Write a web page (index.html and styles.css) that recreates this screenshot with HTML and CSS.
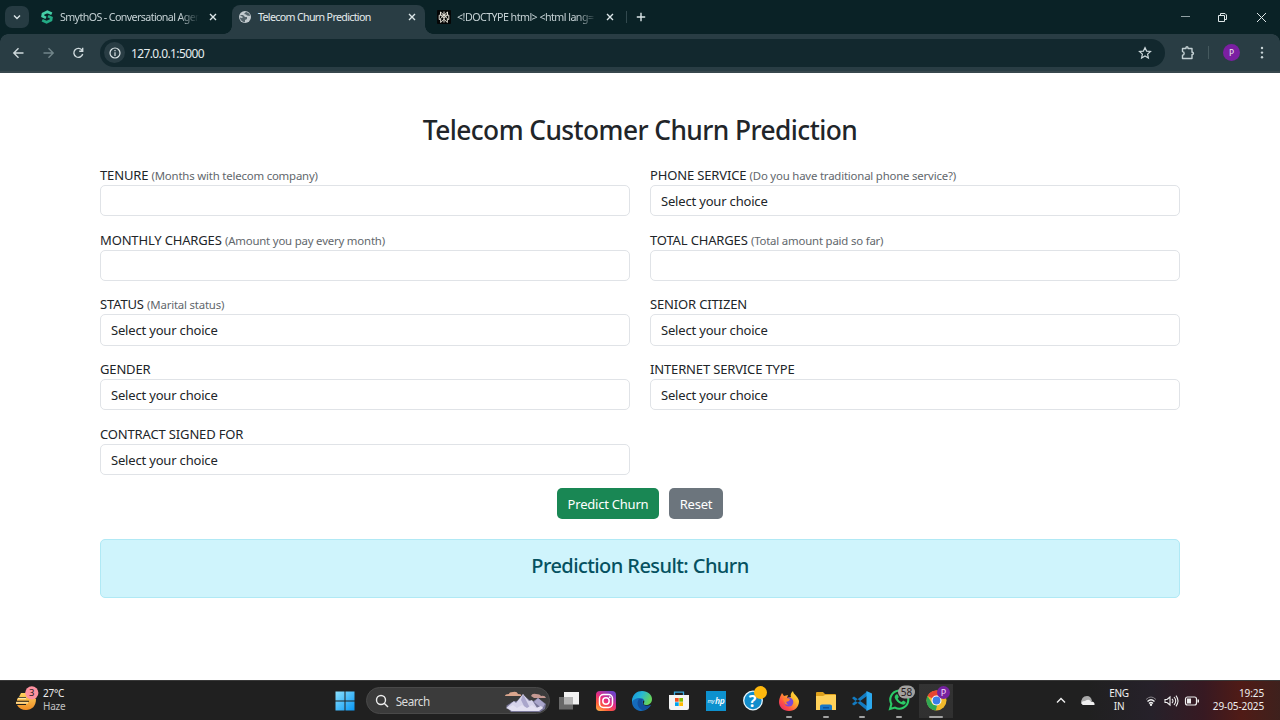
FILE: index.html
```html
<!DOCTYPE html>
<html lang="en">
<head>
<meta charset="utf-8">
<title>Telecom Churn Prediction</title>
<link rel="stylesheet" href="styles.css">
</head>
<body>
<header class="tabs">
  <div class="tab-search"><svg width="10" height="10" viewBox="0 0 10 10"><path class="ln" d="M2 3.5 5 6.5 8 3.5"/></svg></div>
  <div class="tab first">
    <svg class="fav" width="14" height="14" viewBox="0 0 14 14" fill="none" stroke-width="2.7"><path stroke="#45cfa7" d="M11.8 3.8 7.4 1.7 3 3.9 2.6 6.2 6 7.9"/><path stroke="#23aa84" d="M2.2 10.2 6.6 12.3 11 10.1 11.4 7.8 8 6.1"/></svg>
    <span class="title fade t1">SmythOS - Conversational Agen</span>
    <svg class="close" width="10" height="10" viewBox="0 0 10 10"><path class="ln" d="M2 2 8 8M8 2 2 8"/></svg>
  </div>
  <div class="tab active">
    <svg class="fav" width="14" height="14" viewBox="0 0 14 14"><circle cx="7" cy="7" r="6" fill="#c3cbcf"/><path fill="#53636a" d="M2 5h3l2 2 2 0 0 2-2 1v2.3C4 12 2 9.500 1.800 7.500L4 8 5 7 3 6zM8 1.800l3.500 2L12 6 9 5.500 8 4.500 6 4l1-1z"/></svg>
    <span class="title t2">Telecom Churn Prediction</span>
    <svg class="close end" width="10" height="10" viewBox="0 0 10 10"><path class="ln" d="M2 2 8 8M8 2 2 8"/></svg>
  </div>
  <div class="tab third">
    <svg class="fav" width="14" height="14" viewBox="0 0 14 14"><rect width="14" height="14" rx="1" fill="#050505"/><path fill="none" stroke="#e7e3d8" stroke-width="1" d="M7 1.500v11M3.500 2v3L7 8.200 10.500 5V2L7 5.200 3.500 2M2.200 5.200h9.600v4.300h-1.500v3L7 9.200l-3.300 3.300v-3H2.200zM7 5.200 3.700 8.500v1M7 5.200l3.300 3.300v1"/></svg>
    <span class="title fade t3">&lt;!DOCTYPE html&gt; &lt;html lang=</span>
    <svg class="close" width="10" height="10" viewBox="0 0 10 10"><path class="ln" d="M2 2 8 8M8 2 2 8"/></svg>
  </div>
  <i class="tab-rule"></i>
  <svg class="plus" width="10" height="10" viewBox="0 0 10 10"><path class="ln" d="M5 .8v8.400M.8 5h8.400"/></svg>
  <svg class="wins" width="94" height="16" viewBox="0 0 94 16" fill="none" stroke="#dfe7e8"><path stroke="#91a1a4" d="M5 7.500h9"/><path d="M42.500 6.500h6v6h-6zM44.500 6V4.500h4.500l1.500 1.500v4.500H49"/><path d="m81 4 9 9m0-9-9 9"/></svg>
</header>
<nav class="toolbar">
  <svg width="100" height="28" viewBox="0 0 100 28" fill="none" stroke="#cfdadd" stroke-width="1.400"><path d="M23.500 14h-9.500M18.500 9.300 13.800 14l4.700 4.700"/><path stroke="#71858a" d="M43.500 14H53M48.500 9.300l4.700 4.700-4.700 4.700"/><path d="M82.200 11.500a4.500 4.500 0 1 0 .5 3.500M82.700 8.800v3.400h-3.500"/></svg>
  <div class="address">
    <span class="info"><svg width="12" height="12" viewBox="0 0 12 12" fill="none" stroke="#dce5e7" stroke-width="1.200"><circle cx="6" cy="6" r="5"/><path d="M6 5.300V9M6 3v1.200"/></svg></span>
    <span class="url">127.0.0.1:5000</span>
    <svg class="star" width="14" height="14" viewBox="0 0 14 14"><path fill="none" stroke="#cbd7da" stroke-width="1.200" d="m7 1.600 1.600 3.500 3.900.4-2.900 2.600.8 3.900L7 10 3.600 12l.8-3.900-2.900-2.600 3.900-.4z"/></svg>
  </div>
  <svg class="ext" width="16" height="16" viewBox="0 0 16 16"><path fill="none" stroke="#c3d0d3" stroke-width="1.400" stroke-linejoin="round" d="M2.500 3.500H6V2.700a1 1 0 0 1 2 0v.8h4v3.700h.6a1.200 1.200 0 0 1 0 2.300H12v4H2.500v-3.200c2.200-.2 2.200-3.600 0-3.800z"/></svg>
  <i class="bar-rule"></i><span class="avatar">P</span>
  <svg class="dots" width="4" height="14" viewBox="0 0 4 14" fill="#c9d5d8"><circle cx="2" cy="2" r="1.200"/><circle cx="2" cy="6.600" r="1.200"/><circle cx="2" cy="11.200" r="1.200"/></svg>
</nav>
<main class="page">
  <h1>Telecom Customer Churn Prediction</h1>
  <form class="grid">
    <div class="field"><label><span>TENURE</span> <small>(Months with telecom company)</small></label><div class="control"></div></div>
    <div class="field"><label><span>PHONE SERVICE</span> <small>(Do you have traditional phone service?)</small></label><div class="control">Select your choice</div></div>
    <div class="field"><label><span>MONTHLY CHARGES</span> <small>(Amount you pay every month)</small></label><div class="control"></div></div>
    <div class="field"><label><span>TOTAL CHARGES</span> <small>(Total amount paid so far)</small></label><div class="control"></div></div>
    <div class="field"><label><span>STATUS</span> <small>(Marital status)</small></label><div class="control">Select your choice</div></div>
    <div class="field"><label><span>SENIOR CITIZEN</span></label><div class="control">Select your choice</div></div>
    <div class="field"><label><span>GENDER</span></label><div class="control">Select your choice</div></div>
    <div class="field"><label><span>INTERNET SERVICE TYPE</span></label><div class="control">Select your choice</div></div>
    <div class="field"><label><span>CONTRACT SIGNED FOR</span></label><div class="control">Select your choice</div></div>
  </form>
  <div class="actions"><button class="btn green">Predict Churn</button><button class="btn gray">Reset</button></div>
  <div class="alert">Prediction Result: Churn</div>
</main>
<footer class="taskbar">
  <div class="weather">
    <svg width="26" height="30" viewBox="0 0 26 30"><defs><linearGradient id="sun" x2="0" y2="1"><stop stop-color="#ffd25c"/><stop offset="1" stop-color="#ee8c25"/></linearGradient></defs><path fill="url(#sun)" d="M6 7h8l7 6c0 7-4 11-10 11-4 0-7-1.500-9-5h9v-1H1v-2.300h13v-1H2v-2.200h9v-1.500H4z"/><path stroke="#ffe6a1" stroke-width="1.300" d="M3 12.500h8M1 16.800h12"/><circle cx="16.800" cy="6.800" r="6.600" fill="#ff91a0"/><text class="badge-num small-num" x="16.800" y="10.300">3</text></svg>
    <div class="two"><span>27°C</span><span class="dim">Haze</span></div>
  </div>
  <div class="apps">
    <div class="app start"><svg width="20" height="20" viewBox="0 0 20 20"><defs><linearGradient id="win" x2="1" y2="1"><stop stop-color="#8be1ff"/><stop offset="1" stop-color="#0796f3"/></linearGradient></defs><path fill="url(#win)" d="M.5.5h9v9h-9zM10.500.5h9v9h-9zM.5 10.500h9v9h-9zM10.500 10.500h9v9h-9z"/></svg></div>
    <div class="search">
      <svg width="14" height="14" viewBox="0 0 14 14" fill="none" stroke="#ededed" stroke-width="1.400"><circle cx="6" cy="6" r="4.500"/><path d="m9.200 9.200 3.800 3.800"/></svg><span>Search</span>
      <svg class="mount" width="44" height="22" viewBox="0 0 44 22"><path fill="#777597" d="m2 16 6-4 5-1 6-6 9 7 6-4 8 6-1 5-5 3H7z"/><path fill="#d6d3ea" d="M2 18 10 11l2 2 7-9 6 7 3-1 7 11H8z"/><path fill="#aaa6cb" d="m19 4 8 16h-5L17 10zM30 12l4-4 7 6-3 5-3-3z"/><path fill="#e3e0f1" d="m4 18 5-3 4 3 5-3 5 3 5-3 4 3 5-2 2 2-4 3H8z"/><path fill="#dba68e" d="M1 6q0-2 4-2 0-2 4-2 4-1 5 2 4 0 3 2z"/><path fill="#c59992" d="M27 6q1-3 5-2 4 0 5 2 4-1 5 2H30z"/></svg>
    </div>
    <div class="app"><svg width="22" height="20" viewBox="0 0 22 20"><rect x="6" y="1" width="15" height="12.500" fill="#f1f1f1"/><rect x="1" y="6" width="14" height="12.500" fill="#686868"/><path fill="#b4b4b4" d="M6 6h9v7.500H6z"/></svg></div>
    <div class="app"><svg width="20" height="20" viewBox="0 0 20 20"><defs><linearGradient id="ig" x1="0" y1="1" x2=".7" y2="0"><stop stop-color="#ffc34e"/><stop offset=".3" stop-color="#ff5b38"/><stop offset=".6" stop-color="#e62c83"/><stop offset="1" stop-color="#7142c9"/></linearGradient></defs><rect width="20" height="20" rx="4" fill="url(#ig)"/><g fill="none" stroke="#fff" stroke-width="1.500"><rect x="3.500" y="3.500" width="13" height="13" rx="4"/><circle cx="10" cy="10" r="3.200"/></g><circle cx="13.800" cy="6.200" r=".9" fill="#fff"/></svg></div>
    <div class="app"><svg width="20" height="20" viewBox="0 0 20 20"><defs><linearGradient id="edge" y2=".4"><stop stop-color="#1491df"/><stop offset=".5" stop-color="#27b8d4"/><stop offset="1" stop-color="#65d35c"/></linearGradient></defs><path fill="#156bbc" d="M0 11C0 5 4 2 9 2l7 5-5 3c-1 5 3 7 8 4-3 5-8 6-11 6-5-1-8-5-8-9z"/><path fill="url(#edge)" d="M0 9C1 3 5 0 10 0c6 0 10 4 10 8 0 4-3 6-6 6-2 0-3-1-2-2 1-2 0-5-4-5-4 0-8 2-8 5z"/><path fill="#124f9d" d="M7 8c-3 4-1 9 3 11 4 .5 7-2 9-5-5 2-9 0-9-3 0-2 1-3 1-3z"/></svg></div>
    <div class="app"><svg width="20" height="20" viewBox="0 0 20 20"><path fill="none" stroke="#38a8de" stroke-width="1.300" d="M5.500 5V1.200h9V5"/><path fill="#f4f4f4" d="M0 4h20v13q0 2-2 2H2q-2 0-2-2z"/><path fill="#f25022" d="M6 7h3.700v3.700H6z"/><path fill="#7fba00" d="M10.300 7H14v3.700h-3.700z"/><path fill="#00a4ef" d="M6 11.300h3.700V15H6z"/><path fill="#ffb900" d="M10.300 11.300H14V15h-3.700z"/></svg></div>
    <div class="app"><svg width="20" height="20" viewBox="0 0 20 20"><rect width="20" height="20" fill="#0d91ce"/><text class="my" x="1.500" y="12">my</text><text class="hp" x="9" y="13">hp</text></svg></div>
    <div class="app"><svg class="over help-icon" width="26" height="26" viewBox="0 0 26 26"><circle cx="11" cy="15.500" r="9.300" fill="#128dcc" stroke="#e7f5fb" stroke-width="1.300"/><text class="help" x="10.500" y="21.500">?</text><circle cx="18.500" cy="7.500" r="6.500" fill="#ffb80d"/></svg></div>
    <div class="app running"><svg width="20" height="20" viewBox="0 0 20 20"><defs><linearGradient id="fox" x1="1" x2="0" y2="1"><stop stop-color="#fff34f"/><stop offset=".35" stop-color="#ffb52a"/><stop offset=".7" stop-color="#ff4e45"/><stop offset="1" stop-color="#d9207d"/></linearGradient></defs><path fill="url(#fox)" d="M2 4 3 2l2 3 4-1-1 3 4-1c-1-3 1-5 2-6 0 3 5 5 6 10 0 6-4 10-10 10S0 16 0 11c0-3 1-5 2-7z"/><circle cx="9.800" cy="11" r="4.500" fill="#7948d7"/><path fill="#ff812e" d="M4 8q4-2 7 0l-1 2-3 1 2 3-3-1z"/></svg></div>
    <div class="app running"><svg width="20" height="20" viewBox="0 0 20 20"><path fill="#dfa11c" d="M0 2q0-1 1-1h6l2 2h10q1 0 1 1v14H0z"/><path fill="#ffd15a" d="M0 5h7l2-1h11v15H0z"/><path fill="#1677c8" d="M4 19v-4q0-1.500 2-1.500h8q2 0 2 1.500v4z"/><path fill="#0a519d" d="M7 16h6v1.500H7z"/></svg></div>
    <div class="app running"><svg width="20" height="20" viewBox="0 0 20 20"><path fill="#137bc1" d="m0 7 2-1.500L15 15v4.500L1 8zM0 13l2 1.500L15 5V.5L1 12z"/><path fill="#2ca9ef" d="m14.500 0 5.500 2.500v15L14.500 20z"/></svg></div>
    <div class="app running"><svg class="over wa" width="28" height="26" viewBox="0 0 28 26"><path fill="#202020" stroke="#2bca66" stroke-width="2.100" d="M3 24l1.400-5A9 9 0 1 1 8 22.600z"/><path fill="#2bca66" d="M8.500 10c1-1 2-1 2.500.2l.8 2-1.100 1.200c1 2 2 2.800 4 3.700l1.500-1.500 2.500 1.400c.3 2-1.700 3-3.300 2.600-4-1-7.400-4.800-7.800-7.500z"/><rect x="11" y=".5" width="17" height="13" rx="6.500" fill="#a2a19f"/><text class="badge-num" x="19.500" y="10.800">58</text></svg></div>
    <div class="app running selected"><svg class="over" width="26" height="26" viewBox="0 0 26 26"><circle cx="12.500" cy="15.500" r="10" fill="#f1b92b"/><path fill="#e64532" d="M3.500 11A10 10 0 0 1 21.200 10.500h-8.700v5z"/><path fill="#31a853" d="M3.500 11 9.200 20l4 0-1.400 5.500A10 10 0 0 1 3.500 11z"/><circle cx="12.500" cy="15.500" r="5" fill="#fff"/><circle cx="12.500" cy="15.500" r="3.900" fill="#3b7ee8"/><circle cx="19.500" cy="7.500" r="6.500" fill="#7621a0"/><text class="badge-p" x="19.500" y="10.800">P</text></svg></div>
  </div>
  <div class="tray">
    <svg width="42" height="18" viewBox="0 0 42 18"><path fill="none" stroke="#f0f0f0" stroke-width="1.400" d="m3 10.500 4-4 4 4"/><path fill="#a9a9a9" d="M27 12q0-8 6-8 4 0 5 5z"/><path fill="#f0f0f0" d="M28.500 13q-2.500-4 2.500-4 4-2.500 6 .4 4-.2 3.500 3.600z"/></svg>
    <div class="two lang"><span>ENG</span><span>IN</span></div>
    <svg class="status" width="54" height="16" viewBox="0 0 54 16" fill="none" stroke="#eee"><path stroke="#858187" d="M1 6.500q5-5 10 0"/><path stroke-width="1.300" d="M2.500 8.500q3.500-3.500 7 0M4 10.500q2-2 4 0"/><circle cx="6" cy="11.800" r="1.200" fill="#eee" stroke="none"/><path stroke-width="1.100" d="M20 6.500h2l3-2.500v8l-3-2.500h-2zM27 6q2 2 0 4M29 4q3.500 4 0 8M31 2.700q4 5.300 0 10.600"/><rect x="40.500" y="4" width="11" height="8" rx="2" stroke-width="1.200"/><path fill="#eee" stroke="none" d="M42 5.500h4v5h-4zM52.500 6.500H54v3h-1.500z"/></svg>
    <div class="two clock"><span>19:25</span><span class="date">29-05-2025</span></div>
  </div>
</footer>
</body>
</html>
```
FILE: styles.css
```css
*{box-sizing:border-box}
body{margin:0;width:1280px;height:720px;overflow:hidden;background:#fff;color:#212529;font:13.3px "Noto Sans",sans-serif;display:flex;flex-direction:column}
svg{flex:none;display:block}
.ln{fill:none;stroke:#dce6e8;stroke-width:1.4}
.tabs{height:34px;flex:none;background:#0a2226;display:flex;align-items:center;padding-left:5px}
.tab-search{width:24px;height:22px;border-radius:7px;background:#263b42;display:grid;place-items:center}
.tab{height:34px;width:193px;display:flex;align-items:center;padding-left:6px;color:#c6d2d5}
.first{margin-left:5px;width:198px}
.fav{margin-right:6px}
.title{font-size:10.7px;white-space:nowrap;width:139px;line-height:18px}
.close{margin-left:9px}
.end{margin-left:10px}
.fade{-webkit-mask-image:linear-gradient(90deg,#000 86%,transparent);mask-image:linear-gradient(90deg,#000 86%,transparent)}
.t1{letter-spacing:-.62px}
.t2{letter-spacing:-.68px}
.t3{letter-spacing:-.55px}
.active{height:29px;align-self:flex-end;background:#293d44;border-radius:8px 8px 0 0;color:#e4ebed;padding-bottom:5px;position:relative}
.active::before,.active::after{content:"";position:absolute;bottom:0;width:8px;height:8px}
.active::before{left:-8px;background:radial-gradient(circle at 0 0,transparent 7.5px,#293d44 8px)}
.active::after{right:-8px;background:radial-gradient(circle at 100% 0,transparent 7.5px,#293d44 8px)}
.third{padding-left:12px;width:199px}
.tab-rule{width:1px;height:12px;background:#32494e;margin-left:2px}
.plus{margin-left:9px}
.wins{margin-left:auto;margin-right:10px}
.toolbar{height:39px;flex:none;background:radial-gradient(circle at 8px 8px,transparent 7.5px,#0a2226 8px) 0 0/8px 8px no-repeat,radial-gradient(circle at 0 8px,transparent 7.5px,#0a2226 8px) 100% 0/8px 8px no-repeat,#293d44;display:flex;align-items:center;border-bottom:2px solid #37474d}
.address{width:1065px;height:28px;border-radius:14px;background:#12282e;display:flex;align-items:center;padding-left:4px}
.info{width:21px;height:21px;border-radius:50%;background:#293d44;display:grid;place-items:center}
.url{font-size:12px;color:#e5edef;margin-left:6px;margin-top:1px;letter-spacing:-.61px}
.star{margin-left:auto;margin-right:13px}
.ext{margin-left:15px}
.bar-rule{width:1px;height:13px;background:#45595e;margin-left:12px}
.avatar{width:17px;height:17px;border-radius:50%;background:#7b1fa2;color:#eee;display:grid;place-items:center;font-size:8.5px;margin-left:14px}
.dots{margin-left:20px}
.page{height:607px;flex:none;padding:41px 100px 0}
h1{margin:0 0 19px;height:32px;line-height:32px;text-align:center;font-size:26.3px;font-weight:520;letter-spacing:-.56px;white-space:nowrap}
.grid{display:grid;grid-template-columns:530px 530px;column-gap:20px;row-gap:13.33px}
.field{height:51.33px;display:flex;flex-direction:column}
label{height:20px;line-height:20px;white-space:nowrap;font-size:13px;letter-spacing:-.15px}
small{font-size:11.4px;color:#62676c;letter-spacing:-.19px}
.control{height:31.33px;border:1px solid #e0e3e7;border-radius:5px;padding:0 10px;line-height:31px;font-size:13px;letter-spacing:-.18px}
.actions{display:flex;gap:10px;justify-content:center;margin-top:12.6px}
.btn{height:31.5px;border:0;border-radius:5px;color:#fff;font:13px "Noto Sans",sans-serif;letter-spacing:-.22px;padding:1px 0 0}
.green{width:102px;background:#198754}
.gray{width:54px;background:#6c757d}
.alert{height:58.5px;margin-top:20px;border:1px solid #b0e9f5;border-radius:5px;background:#cff4fc;color:#055160;text-align:center;font-size:20px;font-weight:520;line-height:52px;letter-spacing:-.58px}
.taskbar{height:40px;flex:none;background:linear-gradient(90deg,#202020 0 85%,#26212a 90%,#371922 94%,#501b16 97%,#3e211d);border-top:1px solid #393939;color:#f0f0f0;display:flex;align-items:center;padding:0 16px}
.weather{width:311px;display:flex;align-items:center}
.weather svg{margin-left:-1px}
.two{display:flex;flex-direction:column;font-size:10px;line-height:13px;letter-spacing:-.25px;margin-top:-1px}
.dim{color:#c1c1c1}
.weather .two{margin-left:2px}
.apps{display:flex;align-items:center}
.app{width:36.67px;height:36px;display:grid;place-items:center;position:relative}
.over{margin-top:-5px;margin-left:2px}
.help-icon{margin-left:6px}
.wa{margin-left:5px}
.start{margin-right:2px}
.search{width:184px;height:27px;border-radius:14px;background:#3b3b3b;border:1px solid #494949;display:flex;align-items:center;padding-left:8px;margin-right:1px;color:#ddd}
.search span{font-size:11.7px;margin-left:7px;letter-spacing:-.5px}
.mount{margin-left:auto;margin-right:1px}
.running::after{content:"";position:absolute;bottom:1px;left:50%;margin-left:-3px;width:6px;height:2px;border-radius:1px;background:#a3a3a3}
.selected{background:linear-gradient(#333,#303030) center/34px 34px no-repeat}
.selected::after{width:14px;margin-left:-7px}
.badge-num{font:10px "Noto Sans";text-anchor:middle;fill:#24191b}
.small-num{font-size:9.5px}
.badge-p{font:9px "Noto Sans";text-anchor:middle;fill:#f1ddfa}
.my{font:italic 5.5px "Noto Sans";fill:#fff;letter-spacing:-.4px}
.hp{font:italic 600 8.5px "Noto Sans";fill:#fff;letter-spacing:-.4px}
.help{font:bold 16px "Noto Sans";text-anchor:middle;fill:#fff}
.tray{margin-left:auto;display:flex;align-items:center}
.lang{text-align:center;margin-left:11px;width:24px}
.status{margin-left:14px}
.clock{text-align:right;margin-left:11px;width:54px;letter-spacing:-.1px}
```
